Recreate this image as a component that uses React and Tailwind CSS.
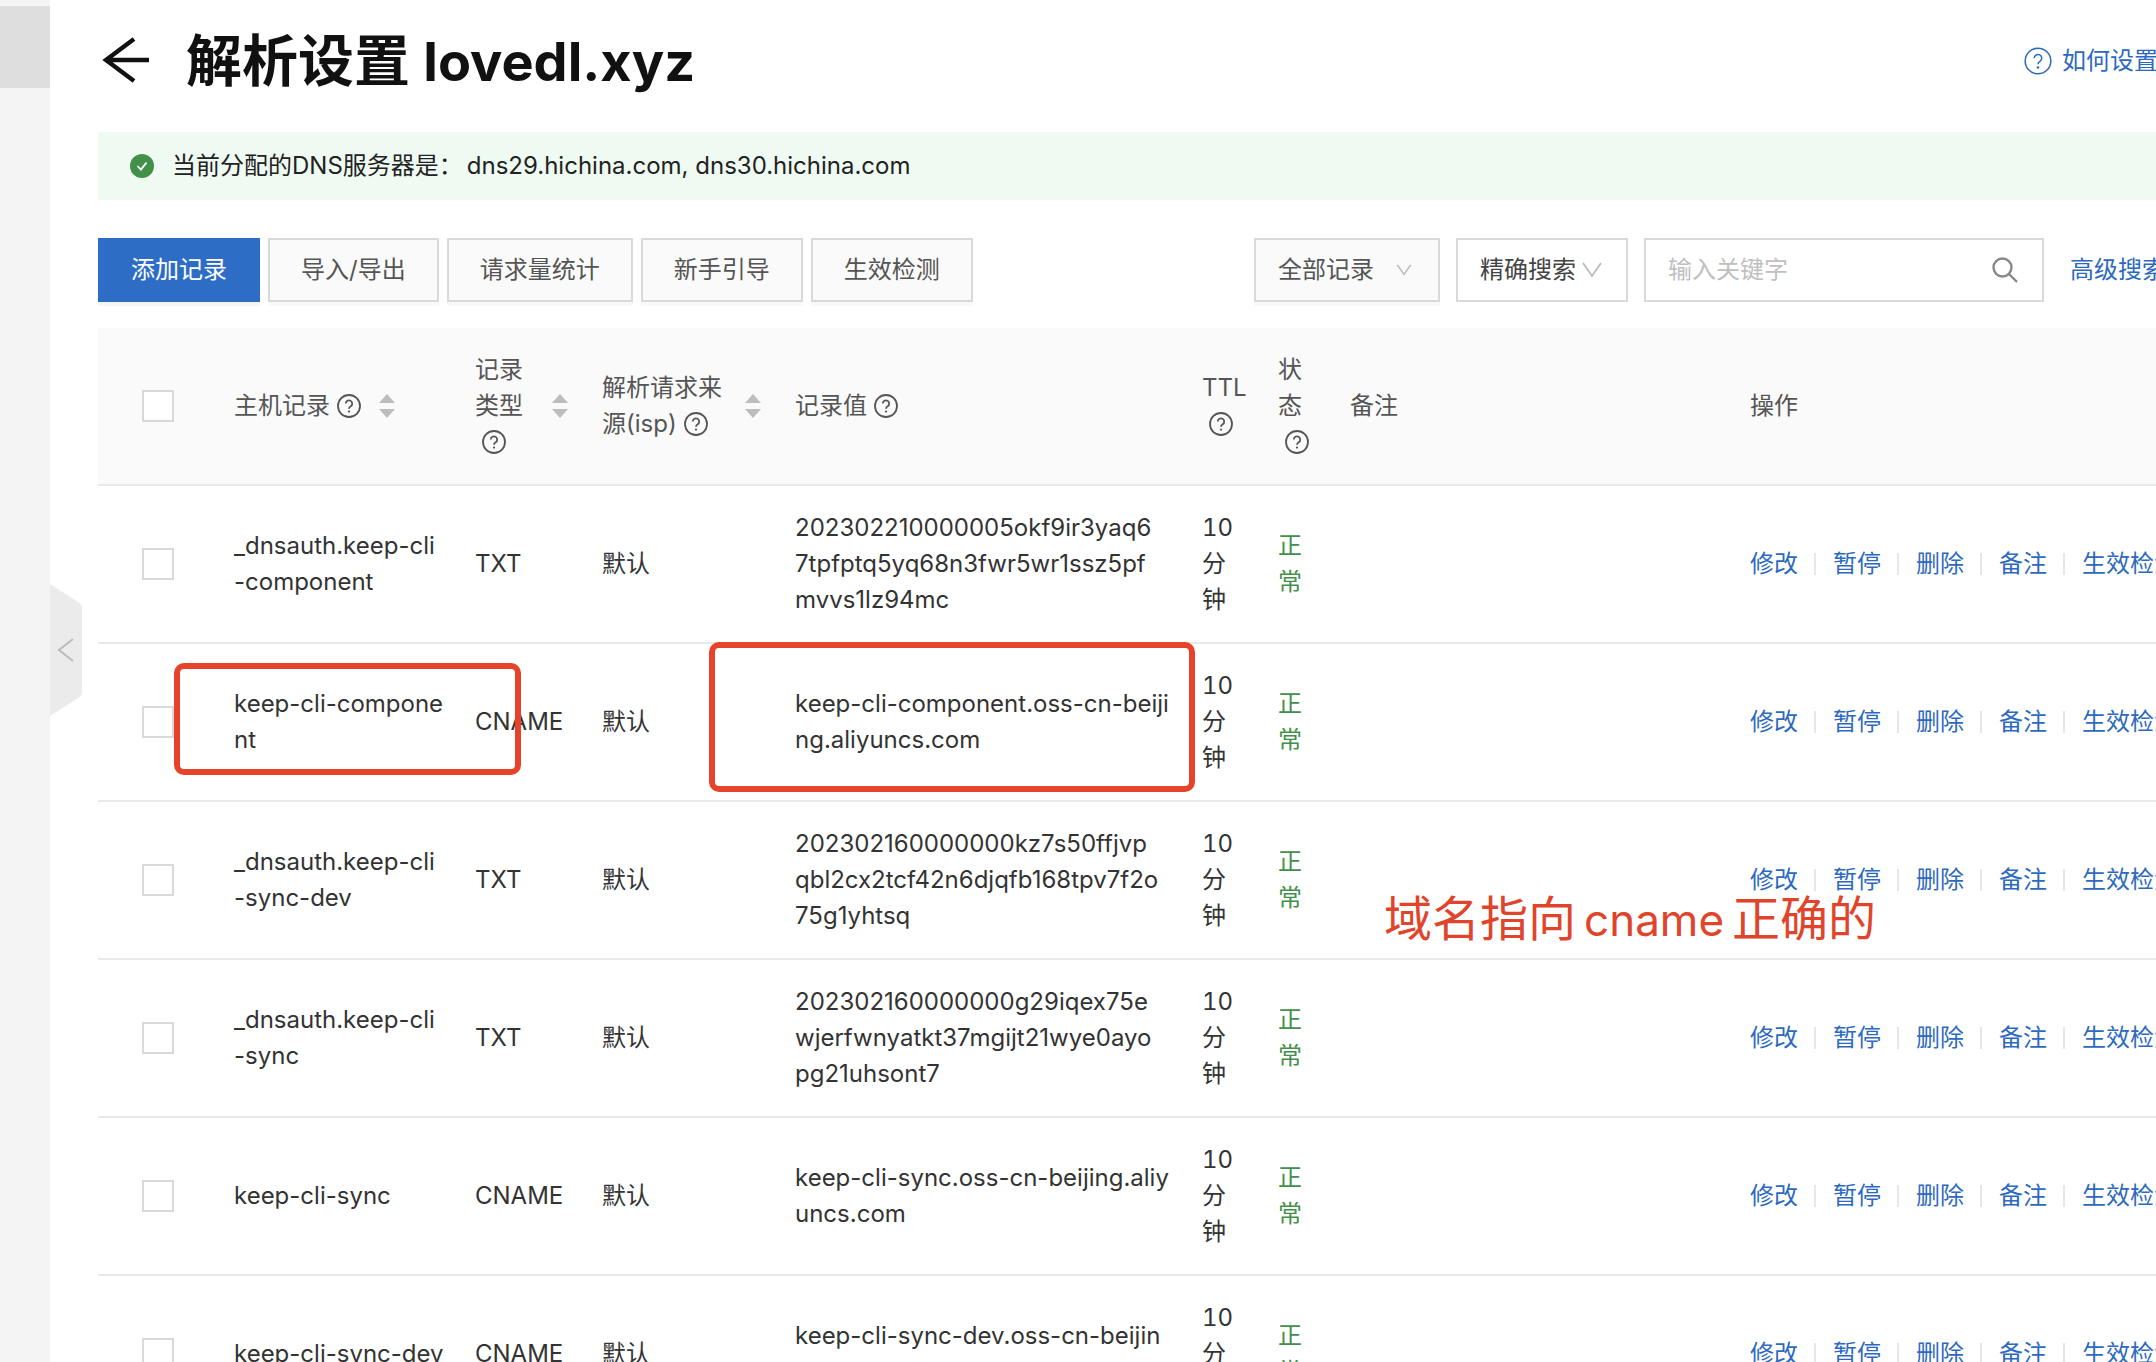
import { useState } from 'react';

const dnsServers = ['dns29.hichina.com', 'dns30.hichina.com'];

const records = [
  { id: 1, host: '_dnsauth.keep-cli\n-component', type: 'TXT', value: '202302210000005okf9ir3yaq6\n7tpfptq5yq68n3fwr5wr1ssz5pf\nmvvs1lz94mc' },
  { id: 2, host: 'keep-cli-compone\nnt', type: 'CNAME', value: 'keep-cli-component.oss-cn-beiji\nng.aliyuncs.com' },
  { id: 3, host: '_dnsauth.keep-cli\n-sync-dev', type: 'TXT', value: '202302160000000kz7s50ffjvp\nqbl2cx2tcf42n6djqfb168tpv7f2o\n75g1yhtsq' },
  { id: 4, host: '_dnsauth.keep-cli\n-sync', type: 'TXT', value: '202302160000000g29iqex75e\nwjerfwnyatkt37mgijt21wye0ayo\npg21uhsont7' },
  { id: 5, host: 'keep-cli-sync', type: 'CNAME', value: 'keep-cli-sync.oss-cn-beijing.aliy\nuncs.com' },
  { id: 6, host: 'keep-cli-sync-dev', type: 'CNAME', value: 'keep-cli-sync-dev.oss-cn-beijin\ng.aliyuncs.com' },
];

const actions = ['修改', '暂停', '删除', '备注', '生效检测'];

function HelpIcon({ className, strokeWidth = 1.8 }) {
  return (
    <svg viewBox="0 0 24 24" fill="none" stroke="currentColor" strokeWidth={strokeWidth} className={className}>
      <circle cx="12" cy="12" r="11" />
      <path d="M8.8 9.6a3.2 3.2 0 1 1 4.9 2.7c-1.1.7-1.7 1.2-1.7 2.4" />
      <circle cx="12" cy="17.6" r="1.1" fill="currentColor" stroke="none" />
    </svg>
  );
}

function Chevron({ className }) {
  return (
    <svg viewBox="0 0 20 16" fill="none" stroke="currentColor" strokeWidth="1.8" className={className}>
      <path d="M1 1l9 13 9-13" />
    </svg>
  );
}

function Sorter() {
  return (
    <button aria-label="排序" className="w-5 shrink-0 flex justify-center text-[#bdbdbd]">
      <svg viewBox="0 0 16 24" fill="currentColor" className="w-4 h-6">
        <path d="M8 0l8 9H0zM8 24l8-9H0z" />
      </svg>
    </button>
  );
}

function HeaderCell({ label, help, sortable }) {
  return (
    <th scope="col" className="px-4 font-normal text-left border-b-2 border-[#e8e9ec]">
      <div className="flex items-center gap-4">
        <span>
          {label}
          {help && <HelpIcon className="inline-block w-6 h-6 ml-[7px] align-[-4px]" />}
        </span>
        {sortable && <Sorter />}
      </div>
    </th>
  );
}

function Cell({ className = '', children }) {
  return <td className={`px-4 border-b-2 border-[#e8e9ec] ${className}`}>{children}</td>;
}

function Checkbox({ label, checked, onChange }) {
  return (
    <input
      type="checkbox"
      aria-label={label}
      checked={checked}
      onChange={onChange}
      className="block appearance-none w-8 h-8 ml-11 bg-white border-2 border-[#d9d9d9] checked:bg-[#2d6dc6]"
    />
  );
}

function ToolButton({ children }) {
  return (
    <button className="h-16 px-[31px] border-2 border-[#d9d9d9] bg-[#fafafa] text-[#555] shadow-[0_4px_0_#f9f9f9]">
      {children}
    </button>
  );
}

export default function App() {
  const [selected, setSelected] = useState([]);
  const [keyword, setKeyword] = useState('');

  const toggle = (id) => {
    setSelected(selected.includes(id) ? selected.filter((x) => x !== id) : [...selected, id]);
  };

  const toggleAll = () => {
    setSelected(selected.length === records.length ? [] : records.map((r) => r.id));
  };

  return (
    <div className="relative flex h-screen overflow-hidden bg-white text-2xl leading-9 text-[#333] font-[Inter,'Noto_Sans_CJK_SC',sans-serif]">
      <aside className="w-[50px] shrink-0 bg-[#f4f4f4] pt-[6px]">
        <div className="h-[82px] bg-[#dedede]" />
      </aside>

      {/* Sidebar collapse handle */}
      <button aria-label="收起" className="absolute left-[50px] top-[584px]">
        <svg viewBox="0 0 32 132" className="w-8 h-[132px]" fill="none">
          <path d="M0 0l28 18q4 2 4 6v84q0 4-4 6L0 132z" fill="#ebebeb" />
          <path d="M23 55L9 66l14 11" stroke="#bbb" strokeWidth="2" />
        </svg>
      </button>

      <main className="flex-1 min-w-0 pl-12 -mr-6">
        <header className="flex items-center justify-between h-[132px] pb-[10px] pr-[22px]">
          <div className="flex items-center gap-9">
            <button aria-label="返回" className="pl-1">
              <svg viewBox="0 0 48 48" className="w-12 h-12" fill="none" stroke="#111" strokeWidth="4.4">
                <path d="M32 2L4 23l28 21M3 23h44" />
              </svg>
            </button>
            <h1 className="text-[56px] leading-[72px] font-bold text-[#111]">
              解析设置 <span className="text-[54px]">lovedl.xyz</span>
            </h1>
          </div>
          <a href="#help" className="flex items-center gap-[10px] text-[#2d6abf]">
            <HelpIcon className="w-7 h-7" strokeWidth={1.3} />
            如何设置
          </a>
        </header>

        <div className="flex items-center h-[68px] pl-8 bg-[#effaf2] text-[#222]">
          <svg viewBox="0 0 24 24" className="w-6 h-6 mr-[18px]" fill="none">
            <circle cx="12" cy="12" r="12" fill="#43904a" />
            <path d="M7.5 12l3.4 3.6 5.6-7" stroke="#fff" strokeWidth="1.8" />
          </svg>
          <p className="flex gap-1">
            <span>当前分配的DNS服务器是：</span>
            <span>{dnsServers.join(', ')}</span>
          </p>
        </div>

        <div className="flex items-center justify-between pt-[38px] pb-[26px] pr-[14px]">
          <div className="flex gap-2">
            <button className="h-16 px-[33px] bg-[#2d6dc6] text-white shadow-[0_4px_0_#f5f5f5]">添加记录</button>
            <ToolButton>导入/导出</ToolButton>
            <ToolButton>请求量统计</ToolButton>
            <ToolButton>新手引导</ToolButton>
            <ToolButton>生效检测</ToolButton>
          </div>

          <div className="flex items-center">
            <div className="relative mr-4">
              <select aria-label="记录范围" className="appearance-none w-[186px] h-16 pl-[22px] border-2 border-[#d9d9d9] bg-[#fafafa] text-[#555] shadow-[0_4px_0_#f9f9f9]">
                <option>全部记录</option>
              </select>
              <Chevron className="absolute right-7 top-[26px] w-4 h-3 text-[#bbb] pointer-events-none" />
            </div>
            <div className="relative mr-4">
              <select aria-label="搜索方式" className="appearance-none w-[172px] h-16 pl-[22px] border-2 border-[#d9d9d9] bg-white text-[#444]">
                <option>精确搜索</option>
              </select>
              <Chevron className="absolute right-[26px] top-6 w-5 h-4 text-[#bbb] pointer-events-none" />
            </div>
            <div className="flex items-center w-[400px] h-16 pl-[22px] pr-6 mr-[26px] border-2 border-[#d9d9d9]">
              <input
                type="text"
                aria-label="关键字"
                placeholder="输入关键字"
                value={keyword}
                onChange={(e) => setKeyword(e.target.value)}
                className="flex-1 min-w-0 outline-none placeholder:text-[#bfbfbf]"
              />
              <button aria-label="搜索">
                <svg viewBox="0 0 26 26" className="w-[26px] h-[26px]" fill="none" stroke="#888" strokeWidth="2.4">
                  <circle cx="10.5" cy="10.5" r="9" />
                  <path d="M17 17l8 8" />
                </svg>
              </button>
            </div>
            <a href="#advanced" className="text-[#2d6abf]">高级搜索</a>
          </div>
        </div>

        <div className="relative">
          <table className="w-full table-fixed border-separate border-spacing-0">
            <colgroup>
              <col className="w-[120px]" />
              <col className="w-[241px]" />
              <col className="w-[127px]" />
              <col className="w-[193px]" />
              <col className="w-[407px]" />
              <col className="w-[76px]" />
              <col className="w-[72px]" />
              <col className="w-[400px]" />
              <col />
            </colgroup>
            <thead>
              <tr className="h-[158px] bg-[#fafafa] text-[#555]">
                <th scope="col" className="border-b-2 border-[#e8e9ec]">
                  <Checkbox label="全选" checked={selected.length === records.length} onChange={toggleAll} />
                </th>
                <HeaderCell label="主机记录" help sortable />
                <HeaderCell label="记录类型" help sortable />
                <HeaderCell label="解析请求来源(isp)" help sortable />
                <HeaderCell label="记录值" help />
                <HeaderCell label="TTL" help />
                <HeaderCell label="状态" help />
                <HeaderCell label="备注" />
                <HeaderCell label="操作" />
              </tr>
            </thead>
            <tbody>
              {records.map((record) => (
                <tr key={record.id} className="h-[158px]">
                  <td className="border-b-2 border-[#e8e9ec]">
                    <Checkbox
                      label={record.host}
                      checked={selected.includes(record.id)}
                      onChange={() => toggle(record.id)}
                    />
                  </td>
                  <Cell className="whitespace-pre">{record.host}</Cell>
                  <Cell>{record.type}</Cell>
                  <Cell>默认</Cell>
                  <Cell className="whitespace-pre">{record.value}</Cell>
                  <Cell className="tabular-nums">10 分钟</Cell>
                  <Cell className="text-[#43904a]">
                    <div className="w-6">正常</div>
                  </Cell>
                  <Cell />
                  <Cell>
                    <div className="flex items-center whitespace-nowrap text-[#2d6abf]">
                      {actions.map((action, i) => (
                        <div key={action} className="flex items-center">
                          {i > 0 && <span className="w-[2px] h-[22px] ml-4 mr-[17px] bg-[#e6e7ea]" />}
                          <a href="#action">{action}</a>
                        </div>
                      ))}
                    </div>
                  </Cell>
                </tr>
              ))}
            </tbody>
          </table>

          {/* Annotations over the table */}
          <div className="absolute left-[76px] top-[335px] w-[347px] h-[112px] border-[6px] border-[#e6432a] rounded-[10px] pointer-events-none" />
          <div className="absolute left-[611px] top-[314px] w-[486px] h-[150px] border-[6px] border-[#e6432a] rounded-[10px] pointer-events-none" />
          <p className="absolute left-[1286px] top-[563px] text-5xl leading-[56px] whitespace-nowrap text-[#e0452c]">
            域名指向<span className="mx-2 text-[44px]">cname</span>正确的
          </p>
        </div>
      </main>
    </div>
  );
}
